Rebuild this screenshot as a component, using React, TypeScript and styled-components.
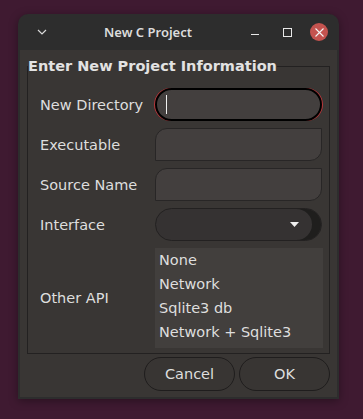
import React from "react";
import styled, { createGlobalStyle } from "styled-components";

const GlobalStyle = createGlobalStyle`
  html, body {
    margin: 0;
    padding: 0;
    background: #3f1a31;
  }
`;

const Page = styled.div`
  padding: 14px 24px 20px 18px;
  font-family: "DejaVu Sans", "Liberation Sans", sans-serif;
`;

const Window = styled.div`
  width: 321px;
  background: #2d2d2d;
  border-radius: 10px 10px 0 0;
  overflow: hidden;
  box-shadow: 0 2px 10px rgba(0, 0, 0, 0.35);
`;

const TitleBar = styled.div`
  display: flex;
  align-items: center;
  height: 36px;
  padding: 0 11px 0 12px;
`;

const TitleText = styled.div`
  flex: 1;
  text-align: center;
  font-family: "Noto Sans", "Open Sans", sans-serif;
  font-weight: 600;
  font-size: 13px;
  color: #dcdcdc;
  padding-right: 4px;
`;

const IconSlot = styled.div<{ $w?: number }>`
  width: ${(p) => p.$w ?? 18}px;
  height: 18px;
  display: flex;
  align-items: center;
  justify-content: center;
`;

const WindowButtons = styled.div`
  display: flex;
  gap: 14px;
`;

const CloseButton = styled(IconSlot)`
  border-radius: 50%;
  background: #c4534f;
`;

const Body = styled.div`
  margin: 0 2px 2px;
  background: #393634;
  padding: 8px 7px 6px;
`;

const Frame = styled.fieldset`
  margin: 0;
  padding: 13px 7px 5px 12px;
  border: 1px solid #232121;
  display: grid;
  grid-template-columns: 115px 1fr;
  row-gap: 7px;
  align-items: center;
`;

const Legend = styled.legend`
  padding: 0;
  font-weight: bold;
  font-size: 14.5px;
  line-height: 17px;
  color: #e2e2e2;
  margin-left: -12px;
`;

const Label = styled.div`
  font-size: 14.5px;
  color: #dedede;
`;

const Entry = styled.div<{ $focused?: boolean }>`
  height: 33px;
  box-sizing: border-box;
  background: #433f3e;
  border: 1px solid #282626;
  border-radius: ${(p) => (p.$focused ? "17px" : "12px 0 12px 0")};
  display: flex;
  align-items: center;
  padding-left: 9px;
  ${(p) =>
    p.$focused &&
    `
    border: 2px solid #000;
    box-shadow: -1px 0 0 #b8363a, 1px 0 0 #b8363a;
  `}
`;

const Caret = styled.div`
  width: 1px;
  height: 19px;
  background: #f0f0f0;
`;

const Combo = styled.div`
  height: 33px;
  box-sizing: border-box;
  background: #353232;
  border: 1px solid #232121;
  border-radius: 17px;
  box-shadow: inset -9px 0 0 #1f1e1d;
  display: flex;
  align-items: center;
  justify-content: flex-end;
  padding-right: 22px;
`;

const List = styled.div`
  background: #423f3d;
  padding: 0 0 4px 4px;
  margin-right: -1px;
`;

const ListItem = styled.div`
  height: 24px;
  line-height: 24px;
  font-size: 14.5px;
  color: #dedede;
`;

const ButtonRow = styled.div`
  display: flex;
  justify-content: flex-end;
  gap: 4px;
  margin-top: 3px;
`;

const Button = styled.button`
  width: 91px;
  height: 34px;
  border-radius: 17px;
  border: 1px solid #1f1d1d;
  background: #383533;
  color: #dedede;
  font-family: "DejaVu Sans", "Liberation Sans", sans-serif;
  font-size: 14.5px;
  padding: 0;
`;

const apiOptions = ["None", "Network", "Sqlite3 db", "Network + Sqlite3"];

export default function App() {
  return (
    <Page>
      <GlobalStyle />
      <Window>
        <TitleBar>
          <IconSlot $w={24}>
            <svg width="10" height="6" viewBox="0 0 10 6">
              <path d="M1 1l4 4 4-4" stroke="#d8d8d8" strokeWidth="1.2" fill="none" />
            </svg>
          </IconSlot>
          <TitleText>New C Project</TitleText>
          <WindowButtons>
            <IconSlot>
              <svg width="8" height="8" viewBox="0 0 8 8">
                <rect x="0" y="6" width="8" height="1" fill="#e8e8e8" />
              </svg>
            </IconSlot>
            <IconSlot>
              <svg width="9" height="9" viewBox="0 0 9 9">
                <rect x="0.5" y="0.5" width="8" height="8" stroke="#e8e8e8" fill="none" />
              </svg>
            </IconSlot>
            <CloseButton>
              <svg width="9" height="9" viewBox="0 0 9 9">
                <path d="M0.5 0.5l8 8M8.5 0.5l-8 8" stroke="#f4f4f4" strokeWidth="1.1" />
              </svg>
            </CloseButton>
          </WindowButtons>
        </TitleBar>
        <Body>
          <Frame>
            <Legend>Enter New Project Information</Legend>
            <Label>New Directory</Label>
            <Entry $focused>
              <Caret />
            </Entry>
            <Label>Executable</Label>
            <Entry />
            <Label>Source Name</Label>
            <Entry />
            <Label>Interface</Label>
            <Combo>
              <svg width="9" height="5" viewBox="0 0 9 5">
                <path d="M0 0h9L4.5 5z" fill="#f0f0f0" />
              </svg>
            </Combo>
            <Label>Other API</Label>
            <List>
              {apiOptions.map((o) => (
                <ListItem key={o}>{o}</ListItem>
              ))}
            </List>
          </Frame>
          <ButtonRow>
            <Button>Cancel</Button>
            <Button>OK</Button>
          </ButtonRow>
        </Body>
      </Window>
    </Page>
  );
}
